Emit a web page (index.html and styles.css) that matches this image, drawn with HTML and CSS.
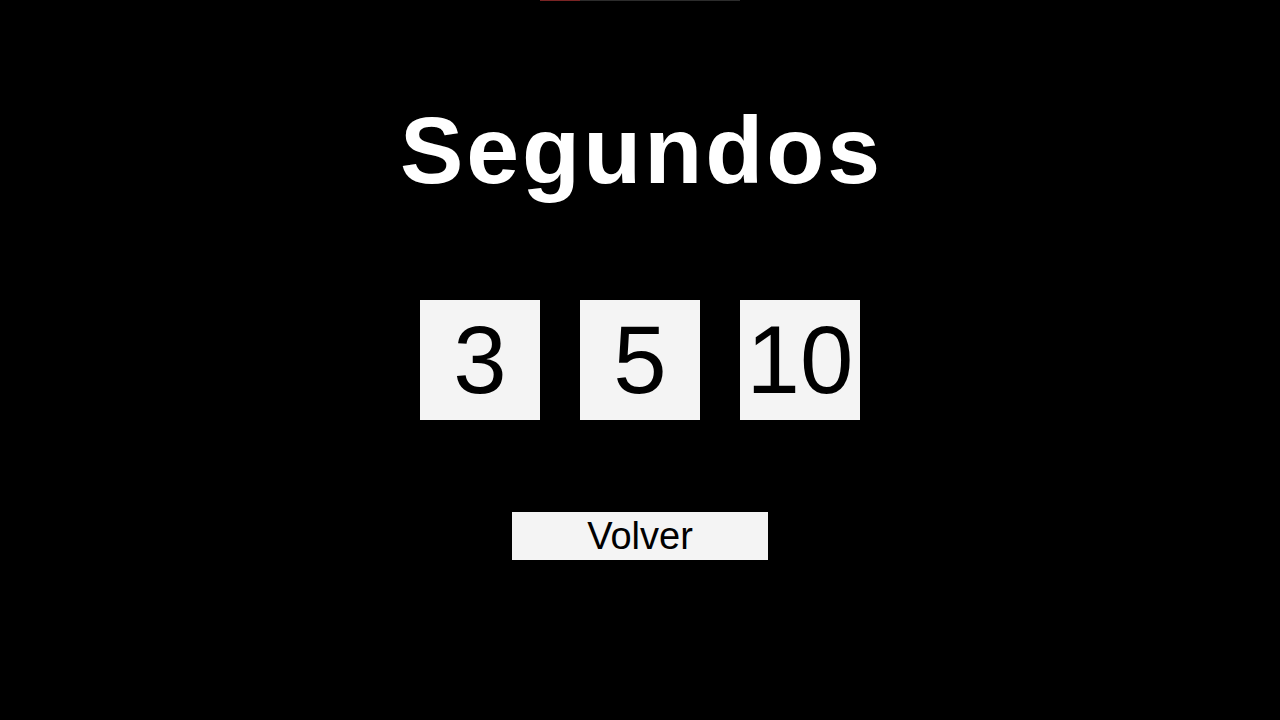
FILE: index.html
```html
<!DOCTYPE html>
<html lang="es">
<head>
<meta charset="utf-8">
<title>Segundos</title>
<link rel="stylesheet" href="styles.css">
</head>
<body>
<div class="progress"><div class="progress-fill"></div></div>
<main class="screen">
  <h1 class="title">Segundos</h1>
  <div class="options">
    <button class="option">3</button>
    <button class="option">5</button>
    <button class="option">10</button>
  </div>
  <button class="back">Volver</button>
</main>
</body>
</html>
```
FILE: styles.css
```css
html, body {
  margin: 0;
  padding: 0;
  background: #000;
  height: 100%;
}
body {
  font-family: "Liberation Sans", Arial, sans-serif;
  overflow: hidden;
}
.progress {
  width: 200px;
  height: 1px;
  margin: 0 auto;
  background: #2c2c2c;
  display: flex;
}
.progress-fill {
  width: 40px;
  background: #7a2424;
}
.screen {
  display: flex;
  flex-direction: column;
  align-items: center;
}
.title {
  margin: 101px 0 0;
  padding-left: 3px;
  color: #fff;
  font-size: 95px;
  line-height: 96px;
  font-weight: bold;
  letter-spacing: 3px;
}
.options {
  display: flex;
  gap: 40px;
  margin-top: 102px;
}
.option {
  width: 120px;
  height: 120px;
  padding: 0;
  border: none;
  background: #f4f4f4;
  color: #000;
  font-family: inherit;
  font-size: 96px;
  line-height: 120px;
}
.back {
  margin-top: 92px;
  width: 256px;
  height: 48px;
  padding: 0;
  border: none;
  background: #f4f4f4;
  color: #000;
  font-family: inherit;
  font-size: 38px;
  line-height: 48px;
}
```
